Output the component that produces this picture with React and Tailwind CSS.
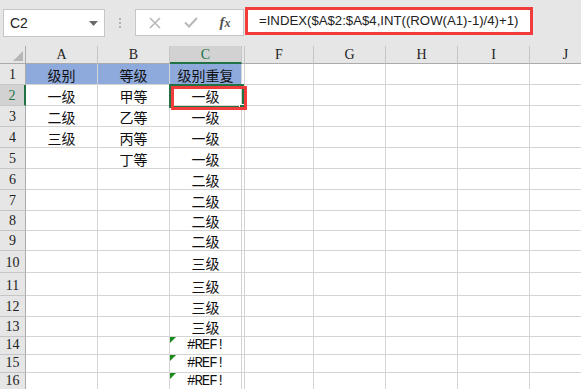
import React from "react";

const colWidths = [72, 72, 72, 3, 69, 72, 72, 72, 72];
const colLabels = ["A", "B", "C", "", "F", "G", "H", "I", "J"];
const rowHeights = [21, 21, 21, 21, 21, 21, 21, 20, 20, 22, 23, 21, 20, 18, 18, 18];

const data = {
  1: ["级别", "等级", "级别重复"],
  2: ["一级", "甲等", "一级"],
  3: ["二级", "乙等", "一级"],
  4: ["三级", "丙等", "一级"],
  5: ["", "丁等", "一级"],
  6: ["", "", "二级"],
  7: ["", "", "二级"],
  8: ["", "", "二级"],
  9: ["", "", "二级"],
  10: ["", "", "三级"],
  11: ["", "", "三级"],
  12: ["", "", "三级"],
  13: ["", "", "三级"],
  14: ["", "", "#REF!"],
  15: ["", "", "#REF!"],
  16: ["", "", "#REF!"],
};

const cjk = { fontFamily: '"Noto Sans CJK SC", "Noto Sans", sans-serif' };
const mono = { fontFamily: '"Liberation Mono", monospace' };
const hdr = { fontFamily: '"Liberation Serif", serif' };
const sans = { fontFamily: '"Liberation Sans", Arial, sans-serif' };

function Toolbar() {
  return (
    <div className="flex h-[46px] items-start bg-[#e6e6e6] pl-[3px] pt-[9px]">
      <div className="flex h-[28px] w-[102px] items-center justify-between border border-[#c6c6c6] bg-white pl-[6px] pr-[6px]">
        <span className="text-[14px] text-[#222]" style={sans}>C2</span>
        <svg width="9" height="5" viewBox="0 0 9 5">
          <path d="M0 0 L9 0 L4.5 5 Z" fill="#6b6b6b" />
        </svg>
      </div>
      <div className="flex h-[28px] w-[30px] flex-col items-center justify-center gap-[2px]">
        <span className="h-[2px] w-[2px] bg-[#b4b4b4]" />
        <span className="h-[2px] w-[2px] bg-[#b4b4b4]" />
        <span className="h-[2px] w-[2px] bg-[#b4b4b4]" />
      </div>
      <div className="flex h-[27px] w-[109px] items-center border border-[#c6c6c6] bg-white">
        <div className="flex w-[38px] justify-center">
          <svg width="12" height="12" viewBox="0 0 12 12">
            <path d="M1 1 L11 11 M11 1 L1 11" stroke="#b8b8b8" strokeWidth="1.6" />
          </svg>
        </div>
        <div className="flex w-[34px] justify-center">
          <svg width="14" height="11" viewBox="0 0 14 11">
            <path d="M1 5.5 L5 9.5 L13 1" stroke="#b8b8b8" strokeWidth="2" fill="none" />
          </svg>
        </div>
        <div className="flex w-[34px] justify-center">
          <span className="text-[15px] font-bold italic text-[#555]" style={{ fontFamily: '"Liberation Serif", serif' }}>
            f<span className="text-[12px]">x</span>
          </span>
        </div>
      </div>
      <div className="ml-[1px] mt-[-2px] flex h-[28px] w-[288px] items-center border-[3px] border-[#f23b3b] bg-white pl-[11px]">
        <span className="text-[13.2px] text-[#222]" style={sans}>
          =INDEX($A$2:$A$4,INT((ROW(A1)-1)/4)+1)
        </span>
      </div>
    </div>
  );
}

function HeaderRow() {
  return (
    <div className="flex h-[18px]">
      <div className="relative h-[18px] w-[26px] shrink-0 border-b border-r border-[#ababab] bg-[#e6e6e6]">
        <svg className="absolute bottom-[2px] right-[2px]" width="10" height="10" viewBox="0 0 10 10">
          <path d="M10 0 L10 10 L0 10 Z" fill="#b6b6b6" />
        </svg>
      </div>
      {colWidths.map((w, i) => {
        const sel = i === 2;
        return (
          <div
            key={i}
            className={
              sel
                ? "flex shrink-0 items-center justify-center border-b-2 border-r border-b-[#217346] border-r-[#c6c6c6] bg-[#d2d2d2] text-[14px] text-[#217346]"
                : "flex shrink-0 items-center justify-center border-b border-r border-b-[#ababab] border-r-[#c6c6c6] bg-[#e6e6e6] text-[14px] text-[#222]"
            }
            style={{ width: w, ...hdr }}
          >
            {colLabels[i]}
          </div>
        );
      })}
    </div>
  );
}

function Row({ r, h }) {
  const sel = r === 2;
  const vals = data[r] || ["", "", ""];
  return (
    <div className="flex" style={{ height: h }}>
      <div
        className={
          sel
            ? "flex w-[26px] shrink-0 items-end justify-center border-b border-r-2 border-b-[#c6c6c6] border-r-[#217346] bg-[#d2d2d2] pb-[1px] text-[14px] leading-[16px] text-[#217346]"
            : "flex w-[26px] shrink-0 items-end justify-center border-b border-r border-b-[#c6c6c6] border-r-[#ababab] bg-[#e6e6e6] pb-[1px] text-[14px] leading-[16px] text-[#222]"
        }
        style={hdr}
      >
        {r}
      </div>
      {colWidths.map((w, i) => {
        const v = i < 3 ? vals[i] : "";
        const blue = r === 1 && i < 3;
        const isErr = v === "#REF!";
        return (
          <div
            key={i}
            className={
              blue
                ? "relative flex shrink-0 items-end justify-center border-b border-r border-[#d4d4d4] bg-[#8eaadc] pb-[1px] text-[14px] leading-[16px] text-[#111]"
                : "relative flex shrink-0 items-end justify-center border-b border-r border-[#d4d4d4] bg-white pb-[1px] text-[14px] leading-[16px] text-[#111]"
            }
            style={{ width: w }}
          >
            {isErr ? (
              <>
                <span className="absolute left-0 top-0 h-0 w-0 border-r-[6px] border-t-[6px] border-r-transparent border-t-[#1a8a1a]" />
                <span className="text-[14px] tracking-[-1px]" style={mono}>#REF!</span>
              </>
            ) : (
              <span style={cjk}>{v}</span>
            )}
          </div>
        );
      })}
    </div>
  );
}

export default function App() {
  return (
    <div className="relative h-[389px] w-[581px] overflow-hidden bg-white">
      <Toolbar />
      <div className="relative">
        <HeaderRow />
        {rowHeights.map((h, idx) => (
          <Row key={idx} r={idx + 1} h={h} />
        ))}
        <div className="pointer-events-none absolute left-[169px] top-[38px] h-[24px] w-[75px] border-2 border-[#217346]" />
        <div className="pointer-events-none absolute left-[239px] top-[58px] h-[6px] w-[6px] border border-white bg-[#217346]" />
        <div className="pointer-events-none absolute left-[171px] top-[40px] h-[24px] w-[76px] border-[3px] border-[#f23b3b]" />
      </div>
    </div>
  );
}
